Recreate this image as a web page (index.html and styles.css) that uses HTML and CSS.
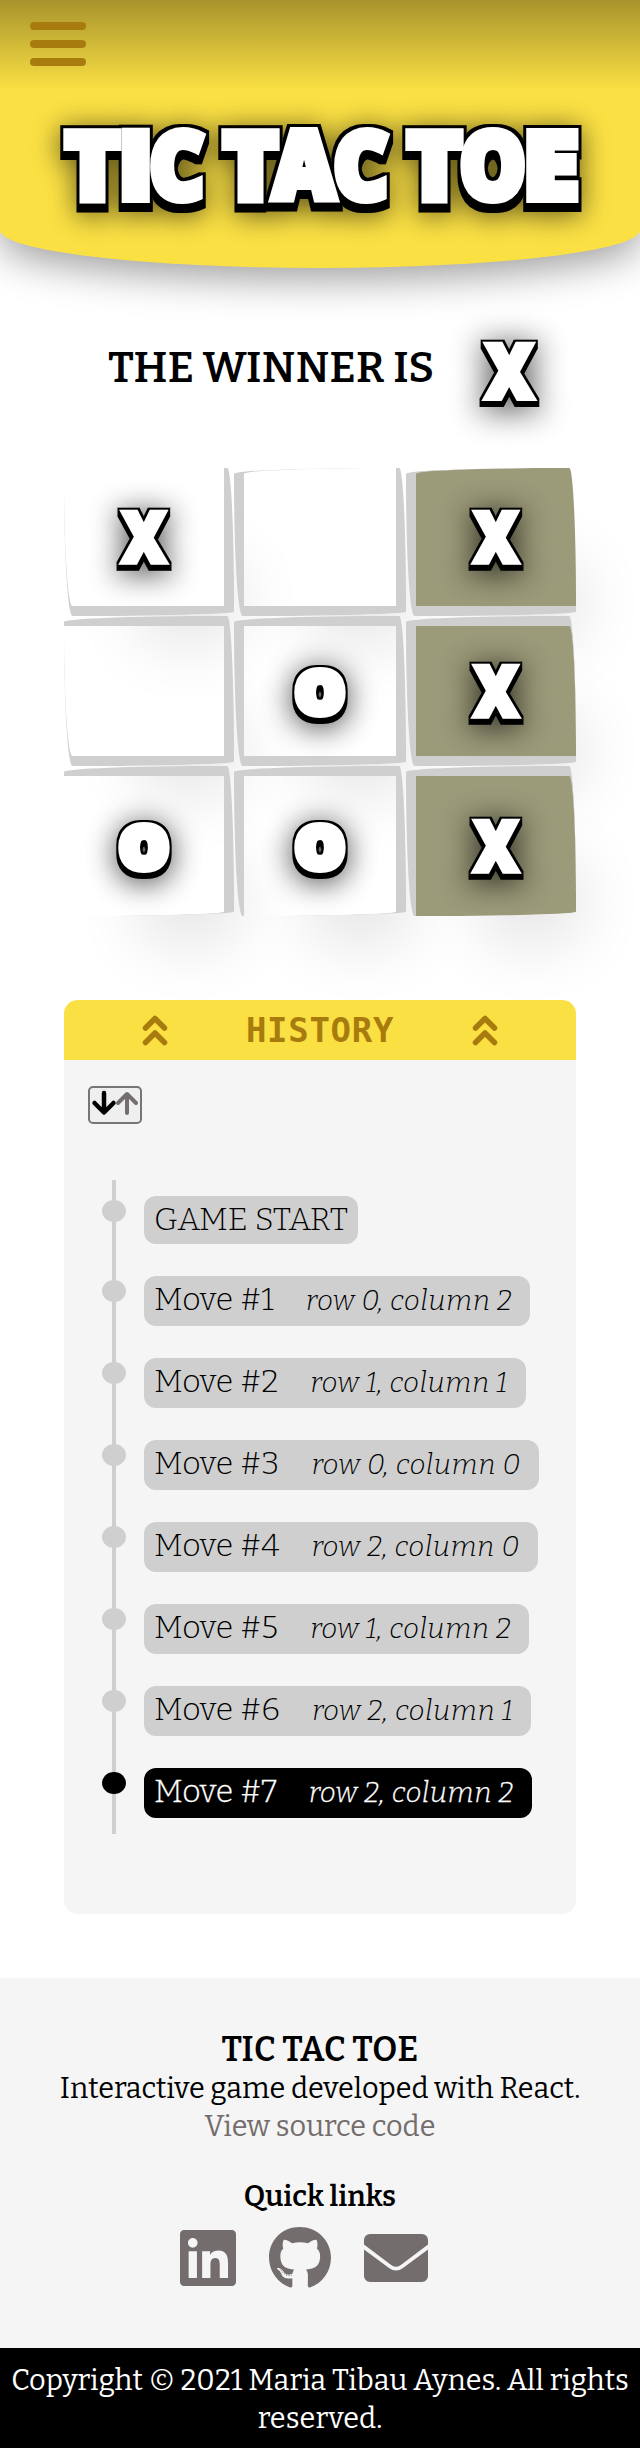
FILE: index.html
```
<!DOCTYPE html>
<html lang="en">
<head>
<meta charset="utf-8">
<title>Tic Tac Toe</title>
<link rel="stylesheet" href="styles.css">
</head>
<body>
<svg class="defs" width="0" height="0" aria-hidden="true">
  <defs>
    <filter id="pop" filterUnits="userSpaceOnUse" x="-60" y="-60" width="760" height="360" color-interpolation-filters="sRGB">
      <feMorphology in="SourceAlpha" operator="dilate" radius="3 6" result="fat"/>
      <feOffset in="fat" dy="3" result="edge"/>
      <feGaussianBlur in="edge" stdDeviation="14" result="soft"/>
      <feOffset in="soft" dy="3" result="glow"/>
      <feComponentTransfer in="glow" result="shade"><feFuncA type="linear" slope="0.6"/></feComponentTransfer>
      <feMerge><feMergeNode in="shade"/><feMergeNode in="edge"/><feMergeNode in="SourceGraphic"/></feMerge>
    </filter>
    <filter id="popMark" filterUnits="userSpaceOnUse" x="-60" y="-60" width="180" height="190" color-interpolation-filters="sRGB">
      <feMorphology in="SourceAlpha" operator="dilate" radius="2 4" result="fat"/>
      <feOffset in="fat" dy="2" result="edge"/>
      <feGaussianBlur in="edge" stdDeviation="15" result="soft"/>
      <feOffset in="soft" dy="4" result="glow"/>
      <feComponentTransfer in="glow" result="shade"><feFuncA type="linear" slope="0.7"/></feComponentTransfer>
      <feMerge><feMergeNode in="shade"/><feMergeNode in="edge"/><feMergeNode in="SourceGraphic"/></feMerge>
    </filter>
    <g id="x" class="mark-glyph" filter="url(#popMark)"><text x="6.5" y="54" font-size="69" textLength="43" lengthAdjust="spacingAndGlyphs">X</text></g>
    <g id="o" class="mark-glyph heavy" filter="url(#popMark)"><text x="4" y="51" font-size="57" textLength="48" lengthAdjust="spacingAndGlyphs">O</text></g>
  </defs>
</svg>

<header class="header">
  <div class="topbar"><button class="menu" aria-label="Menu"><span></span><span></span><span></span></button></div>
  <svg class="title" width="640" height="178" viewBox="0 90 640 178" role="img" aria-label="Tic Tac Toe">
    <g class="title-glyphs" filter="url(#pop)">
      <text x="65" y="199" textLength="55" lengthAdjust="spacingAndGlyphs">T</text>
      <text x="118.3" y="199" textLength="35" lengthAdjust="spacingAndGlyphs">I</text>
      <text x="149.5" y="199" textLength="54.8" lengthAdjust="spacingAndGlyphs">C</text>
      <text x="223" y="199" textLength="55" lengthAdjust="spacingAndGlyphs">T</text>
      <text x="273" y="199" textLength="62" lengthAdjust="spacingAndGlyphs">A</text>
      <text x="333.5" y="199" textLength="54.8" lengthAdjust="spacingAndGlyphs">C</text>
      <text x="407" y="199" textLength="55" lengthAdjust="spacingAndGlyphs">T</text>
      <text x="459.8" y="199" textLength="66" lengthAdjust="spacingAndGlyphs">O</text>
      <text x="522.8" y="199" textLength="56.2" lengthAdjust="spacingAndGlyphs">E</text>
    </g>
  </svg>
</header>

<main class="main">
  <div class="status">
    <h2 class="status-text">THE WINNER IS</h2>
    <svg class="mark mark-big" viewBox="0 0 56 64"><use href="#x"/></svg>
  </div>

  <div class="board">
    <div class="cell top left"><svg class="mark" viewBox="0 0 56 64"><use href="#x"/></svg></div>
    <div class="cell top"></div>
    <div class="cell top right win"><svg class="mark" viewBox="0 0 56 64"><use href="#x"/></svg></div>
    <div class="cell left"></div>
    <div class="cell"><svg class="mark" viewBox="0 0 56 64"><use href="#o"/></svg></div>
    <div class="cell right win"><svg class="mark" viewBox="0 0 56 64"><use href="#x"/></svg></div>
    <div class="cell bottom left"><svg class="mark" viewBox="0 0 56 64"><use href="#o"/></svg></div>
    <div class="cell bottom"><svg class="mark" viewBox="0 0 56 64"><use href="#o"/></svg></div>
    <div class="cell bottom right win"><svg class="mark" viewBox="0 0 56 64"><use href="#x"/></svg></div>
  </div>

  <section class="history">
    <div class="history-head">
      <svg class="chev" width="24" height="30" viewBox="0 0 24 30"><path d="M2.500 13 12 3.500 21.500 13M2.500 27.500 12 18 21.500 27.500"/></svg>
      <h3 class="history-title">HISTORY</h3>
      <svg class="chev" width="24" height="30" viewBox="0 0 24 30"><path d="M2.500 13 12 3.500 21.500 13M2.500 27.500 12 18 21.500 27.500"/></svg>
    </div>
    <button class="sort" aria-label="Sort moves">
      <svg width="24" height="24" viewBox="0 0 24 24"><path class="down" d="M12 2V21M2.500 12 12 21.500 21.500 12"/></svg>
      <svg width="22" height="24" viewBox="0 0 22 24"><path class="up" d="M11 22V4M2 12 11 3 20 12"/></svg>
    </button>
    <ol class="moves">
      <li class="move"><button class="pill first">GAME START</button></li>
      <li class="move"><button class="pill">Move #1<i>row 0, column 2</i></button></li>
      <li class="move"><button class="pill">Move #2<i>row 1, column 1</i></button></li>
      <li class="move"><button class="pill">Move #3<i>row 0, column 0</i></button></li>
      <li class="move"><button class="pill">Move #4<i>row 2, column 0</i></button></li>
      <li class="move"><button class="pill">Move #5<i>row 1, column 2</i></button></li>
      <li class="move"><button class="pill">Move #6<i>row 2, column 1</i></button></li>
      <li class="move current"><button class="pill">Move #7<i>row 2, column 2</i></button></li>
    </ol>
  </section>
</main>

<footer class="footer">
  <div class="info">
    <h3 class="info-title">TIC TAC TOE</h3>
    <p class="line">Interactive game developed with React.</p>
    <p class="line"><a class="source">View source code</a></p>
    <h4 class="quick">Quick links</h4>
    <div class="links">
      <svg width="56" height="64" viewBox="0 0 448 512"><path d="M416 32H31.9C14.3 32 0 46.5 0 64.3v383.4C0 465.5 14.3 480 31.9 480H416c17.6 0 32-14.5 32-32.3V64.3c0-17.8-14.4-32.3-32-32.3zM135.4 416H69V202.2h66.5V416zm-33.2-243c-21.3 0-38.5-17.3-38.5-38.5S80.9 96 102.2 96c21.2 0 38.5 17.3 38.5 38.5 0 21.3-17.2 38.5-38.5 38.5zm282.1 243h-66.4V312c0-24.8-.5-56.7-34.5-56.7-34.6 0-39.9 27-39.9 54.9V416h-66.4V202.2h63.7v29.2h.9c8.9-16.8 30.6-34.5 62.9-34.5 67.2 0 79.7 44.3 79.7 101.9V416z"/></svg>
      <svg width="62" height="64" viewBox="0 0 496 512"><path d="M165.9 397.4c0 2-2.3 3.6-5.2 3.6-3.3.3-5.6-1.3-5.6-3.6 0-2 2.3-3.6 5.2-3.6 3-.3 5.6 1.3 5.6 3.6zm-31.1-4.5c-.7 2 1.3 4.3 4.3 4.9 2.6 1 5.6 0 6.2-2s-1.3-4.3-4.3-5.2c-2.6-.7-5.5.3-6.2 2.3zm44.2-1.7c-2.9.7-4.900 2.6-4.600 4.9.3 2 2.9 3.3 5.900 2.6 2.900-.7 4.900-2.600 4.600-4.600-.3-1.900-3-3.200-5.900-2.900zM244.8 8C106.1 8 0 113.3 0 252c0 110.900 69.800 205.800 169.500 239.200 12.800 2.300 17.300-5.600 17.300-12.100 0-6.200-.3-40.400-.3-61.400 0 0-70 15-84.700-29.800 0 0-11.400-29.100-27.800-36.600 0 0-22.900-15.700 1.600-15.400 0 0 24.900 2 38.600 25.800 21.900 38.600 58.600 27.500 72.900 20.900 2.300-16 8.800-27.100 16-33.700-55.900-6.200-112.300-14.300-112.300-110.500 0-27.500 7.600-41.300 23.600-58.900-2.600-6.500-11.100-33.300 2.600-67.900 20.900-6.500 69 27 69 27 20-5.600 41.500-8.500 62.800-8.500s42.800 2.900 62.800 8.500c0 0 48.100-33.600 69-27 13.700 34.700 5.200 61.400 2.600 67.900 16 17.700 25.800 31.500 25.800 58.900 0 96.500-58.900 104.200-114.800 110.500 9.200 7.900 17 22.900 17 46.400 0 33.700-.3 75.400-.3 83.600 0 6.500 4.600 14.400 17.300 12.100C428.200 457.800 496 362.900 496 252 496 113.300 383.500 8 244.800 8zM97.200 352.900c-1.300 1-1 3.300.7 5.200 1.600 1.600 3.900 2.300 5.200 1 1.300-1 1-3.300-.7-5.200-1.600-1.600-3.900-2.300-5.200-1zm-10.800-8.100c-.7 1.300.3 2.900 2.300 3.900 1.600 1 3.600.7 4.300-.7.7-1.300-.3-2.900-2.300-3.900-2-.6-3.600-.3-4.300.7zm32.400 35.600c-1.600 1.300-1 4.300 1.300 6.200 2.300 2.300 5.200 2.600 6.500 1 1.300-1.300.7-4.300-1.300-6.200-2.200-2.300-5.200-2.600-6.500-1zm-11.400-14.700c-1.600 1-1.600 3.600 0 5.900 1.600 2.300 4.300 3.300 5.600 2.300 1.600-1.300 1.600-3.900 0-6.200-1.400-2.300-4-3.300-5.600-2z"/></svg>
      <svg width="64" height="64" viewBox="0 0 64 64"><path d="M6 8H58A6 6 0 0 1 64 14V18.500L37.500 38.500Q32 43 26.500 38.500L0 18.500V14A6 6 0 0 1 6 8ZM0 23.500 25 42Q32 47 39 42L64 23.500V50A6 6 0 0 1 58 56H6A6 6 0 0 1 0 50Z"/></svg>
    </div>
  </div>
  <p class="copyright">Copyright © 2021 Maria Tibau Aynes. All rights reserved.</p>
</footer>
</body>
</html>
```
FILE: styles.css
```
* { box-sizing: border-box; }
body { margin: 0; background: #fff; color: #000; font-family: "Roboto Slab", Bitter, "DejaVu Serif Condensed", serif; }
h2, h3, h4, p, ol { margin: 0; padding: 0; }
svg { display: block; overflow: visible; }
button { font: inherit; border: 0; padding: 0; margin: 0; background: none; color: inherit; }
.defs { position: absolute; }

.header { height: 268px; background: #fbe044; border-radius: 0 0 50% 50% / 0 0 38px 38px; box-shadow: 0 10px 40px rgba(0, 0, 0, .4); }
.topbar { height: 90px; padding: 22px 30px; background: linear-gradient(#a8942c, #fbe044); }
.menu { display: flex; flex-direction: column; gap: 10px; width: 56px; }
.menu span { height: 8px; border-radius: 4px; background: #a87b0e; }
.title-glyphs, .mark-glyph { font-family: "Open Sans", "Noto Sans", sans-serif; font-weight: 800; fill: #fff; stroke: #fff; stroke-linejoin: miter; stroke-miterlimit: 3; }
.title-glyphs { font-size: 93.500px; stroke-width: 8px; }
.mark-glyph { stroke-width: 5.500px; }
.heavy { stroke-width: 9px; }

.main { padding: 70px 64px 64px; }
.status { display: flex; height: 130px; padding: 1px 0 0 44px; }
.status-text { width: 371px; padding-top: 3px; font-size: 43px; line-height: 52px; font-weight: 600; letter-spacing: .3px; white-space: nowrap; }
.mark { width: 56px; height: 64px; }
.cell .mark { position: relative; top: 3px; }
.mark-big { width: 61px; height: 70px; }

.board { display: grid; grid-template-columns: 170px 172px 170px; grid-template-rows: 148px 150px 150px; }
.cell { display: flex; align-items: center; justify-content: center; border: 10px solid #cfcfcf; border-radius: 95% 4% 97% 5% / 4% 94% 3% 95%; box-shadow: 40px 60px 70px -40px rgba(0, 0, 0, .14); }
.top { border-top: 0; }
.left { border-left: 0; }
.right { border-right: 0; }
.bottom { border-bottom: 0; }
.win { background-color: #9b9a79; }

.history { height: 914px; margin-top: 84px; border-radius: 14px; background: #f5f5f5; overflow: hidden; position: relative; }
.history-head { display: flex; justify-content: space-between; align-items: center; height: 60px; padding: 0 79px; background: #fbe044; color: #a87b0e; }
.history-title { font: 700 34px/60px "DejaVu Sans Mono", monospace; letter-spacing: .7px; }
.chev { fill: none; stroke: #a87b0e; stroke-width: 5.500; stroke-linecap: round; stroke-linejoin: round; }
.sort { display: flex; width: 54px; height: 38px; margin: 26px 0 0 24px; padding: 3px 2px; border: 2px solid #767676; border-radius: 5px; background: #efefef; }
.sort path { fill: none; stroke-width: 4; stroke-linecap: round; stroke-linejoin: round; }
.sort .down { stroke: #000; stroke-width: 4.500; }
.sort .up { stroke: #746d6d; }
.moves { list-style: none; display: flex; flex-direction: column; gap: 32px; width: 440px; margin: 56px 0 0 48px; padding: 16px 0 16px 32px; background: linear-gradient(#cfcfcf, #cfcfcf) 0 0 / 4px 100% no-repeat; }
.move { position: relative; display: flex; }
.move::before { content: ""; position: absolute; left: -42px; top: 4px; width: 24px; height: 22px; border-radius: 50%; background: #cfcfcf; }
.pill { height: 50px; padding: 0 18px 2px 10px; border-radius: 12px; background: #cfcfcf; font: 300 32px/44px Bitter, "DejaVu Serif Condensed", serif; text-align: left; white-space: nowrap; }
.first { height: 48px; padding-right: 10px; }
.pill i { margin-left: 32px; font-size: 28.800px; letter-spacing: .5px; }
.current::before, .current .pill { background: #000; color: #fff; }
.current .pill { -webkit-text-stroke: .3px #fff; }

.info { height: 370px; padding-top: 52px; background: #f5f5f5; text-align: center; }
.footer { font-size: 28.800px; }
.info-title { font-size: 34px; line-height: 40px; font-weight: 600; letter-spacing: .2px; }
.line { line-height: 38px; }
.source { color: #746d6d; }
.quick { margin-top: 31px; font-size: 28.800px; line-height: 40px; font-weight: 600; letter-spacing: .1px; }
.links { display: flex; gap: 33px; margin: 9px 0 0 180px; fill: #746d6d; }
.copyright { height: 100px; padding: 14px 10px 0; background: #000; color: #fff; line-height: 38px; text-align: center; letter-spacing: .1px; }
```
